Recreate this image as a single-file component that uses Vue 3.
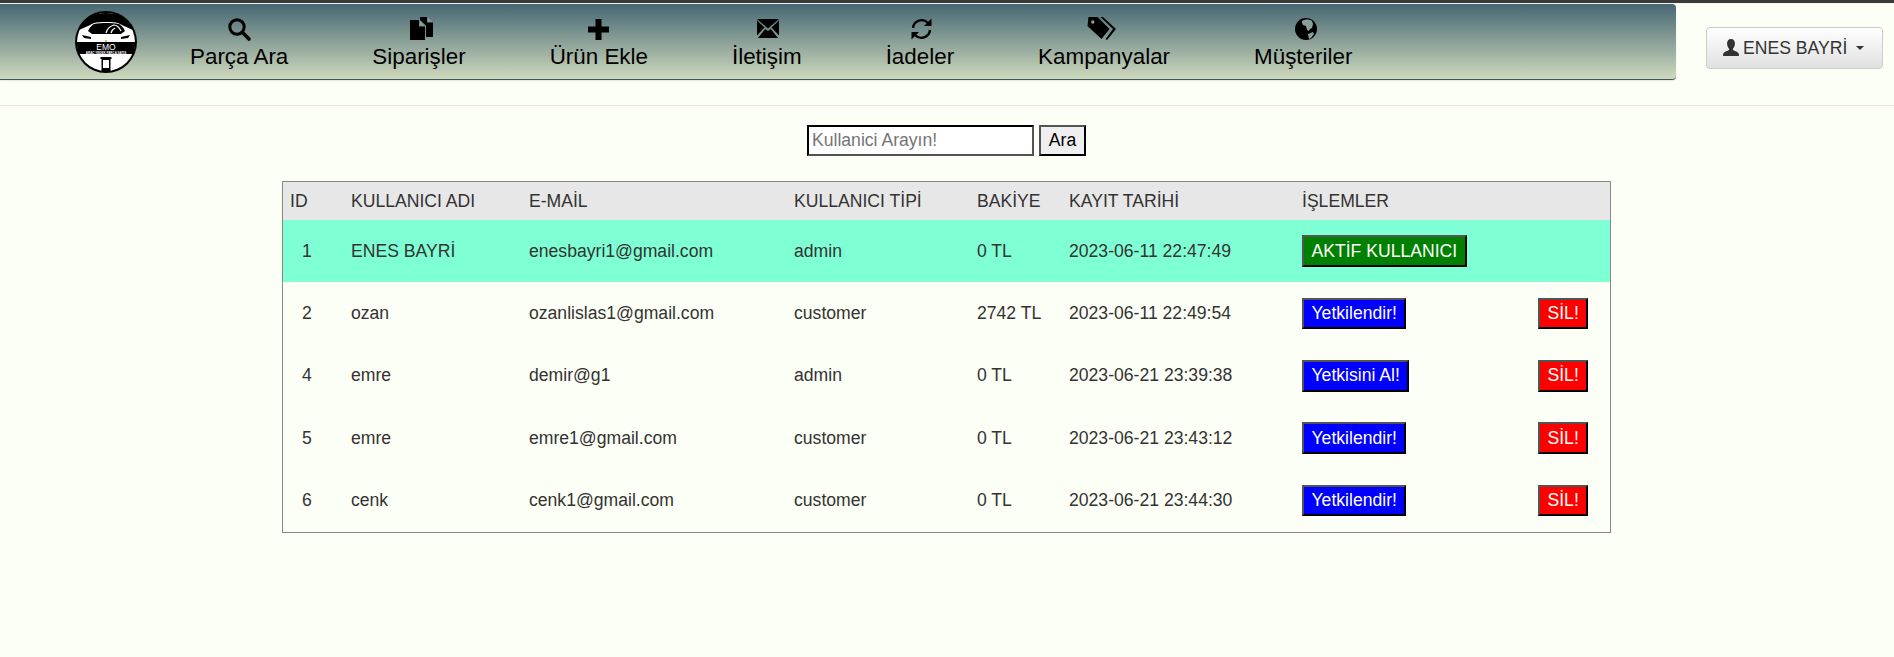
<template>
  <div class="page">
    <div class="top-line"></div>
    <header class="header">
      <nav class="navbar">
        <a class="logo" href="#">
          <svg width="62" height="62" viewBox="0 0 62 62">
            <circle cx="31" cy="31" r="31" fill="#000" />
            <circle cx="31" cy="31" r="29" fill="#fff" />
            <path d="M4 19C9 6 20 2 31 2s22 4 27 17l-9-4-6-3c-3-1-7-1-12-1s-9 0-12 1l-6 3z" fill="#000" />
            <path d="M13 20c2-4 4-6 6-7 4-1 8-1 12-1s9 0 13 1c2 1 4 3 6 7l-4 3H17z" fill="#000" />
            <path d="M31 22c1-4 4-7 8-8 3 0 5 2 7 6M36 22c1-3 2-4 4-5" stroke="#fff" stroke-width="1.200" fill="none" />
            <path d="M7 24l9 2v2l-7-1zM55 24l-9 2v2l7-1z" fill="#000" />
            <path d="M2 31h58c0 5-.5 9-1.500 12H3.500C2.500 40 2 36 2 31z" fill="#000" />
            <circle cx="31" cy="30" r="1" fill="#e8962c" />
            <text x="31" y="39" class="logo-name" text-anchor="middle">EMO</text>
            <text x="31" y="42.500" class="logo-sub" text-anchor="middle">ARAÇ YEDEK PARÇA SATIŞ</text>
            <path d="M25.500 46h11v2h-1v12h-9V48h-1z" fill="#000" />
            <rect x="28" y="49" width="6" height="8" fill="#fff" />
          </svg>
        </a>
        <a v-for="item in menu" :key="item.label" class="nav-item" href="#">
          <svg class="nav-icon" viewBox="0 0 24 24" v-html="item.icon"></svg>
          <span>{{ item.label }}</span>
        </a>
      </nav>
      <button class="user-btn">
        <svg class="user-icon" viewBox="0 0 16 16">
          <path d="M8 0c2.300 0 3.500 1.700 3.500 3.900 0 1.700-.7 3.500-1.600 4.500-.4.500-.3 1.300.3 1.700 1.600.8 3.800 1.400 4.800 3V15H1v-1.900c1-1.600 3.200-2.200 4.800-3 .6-.4.700-1.200.3-1.700C5.200 7.400 4.500 5.600 4.500 3.900 4.500 1.700 5.700 0 8 0z" />
        </svg>
        <span>ENES BAYRİ</span>
        <span class="caret"></span>
      </button>
    </header>
    <hr class="divider" />

    <form class="search" @submit.prevent>
      <input class="search-input" type="text" placeholder="Kullanici Arayın!" />
      <button class="search-btn">Ara</button>
    </form>

    <table class="users">
      <colgroup>
        <col v-for="(w, i) in colWidths" :key="i" :style="{ width: w + 'px' }" />
      </colgroup>
      <thead>
        <tr>
          <th>ID</th>
          <th>KULLANICI ADI</th>
          <th>E-MAİL</th>
          <th>KULLANICI TİPİ</th>
          <th>BAKİYE</th>
          <th>KAYIT TARİHİ</th>
          <th>İŞLEMLER</th>
          <th></th>
        </tr>
      </thead>
      <tbody>
        <tr v-for="u in users" :key="u.id" :class="{ active: u.current }">
          <td class="id">{{ u.id }}</td>
          <td>{{ u.name }}</td>
          <td>{{ u.email }}</td>
          <td>{{ u.type }}</td>
          <td>{{ u.balance }}</td>
          <td>{{ u.date }}</td>
          <td class="btn-cell">
            <button class="act" :class="u.current ? 'green' : 'blue'">{{ u.action }}</button>
          </td>
          <td class="btn-cell del">
            <button v-if="!u.current" class="act red">SİL!</button>
          </td>
        </tr>
      </tbody>
    </table>
  </div>
</template>

<script setup>
const colWidths = [61, 178, 265, 183, 92, 233, 220, 95];

const menu = [
  {
    label: "Parça Ara",
    icon: '<circle cx="10" cy="10" r="7.2" fill="none" stroke="currentColor" stroke-width="3"/><path d="M15.300 15.300l6.700 6.700" stroke="currentColor" stroke-width="3.600" stroke-linecap="round"/>',
  },
  {
    label: "Siparişler",
    icon: '<path d="M3 3h9v6.500h6V23H3z"/><path d="M12.800 3.500l5 5h-5z" fill="#8aa09c"/><path d="M13 0h7v5.500h6V20h-7V8.500L13 3z"/><path d="M20.800 .5l4.700 4.300h-4.700z" fill="#8aa09c"/>',
  },
  {
    label: "Ürün Ekle",
    icon: '<path d="M8.500 2h6v7.500H22v6h-7.500V23h-6v-7.500H1v-6h7.500z"/>',
  },
  {
    label: "İletişim",
    icon: '<path d="M2 2h22L13 11.500z"/><path d="M2 3.500v15l7.500-8z"/><path d="M24 3.500v15l-7.500-8z"/><path d="M3 21l7.300-9 2.700 2 2.700-2 7.300 9z"/>',
  },
  {
    label: "İadeler",
    icon: '<g transform="translate(1.500 0)"><path d="M3.500 11a8.700 8.700 0 0 1 15-5" fill="none" stroke="currentColor" stroke-width="2.400"/><path d="M22 1.500v7.500h-7.500z"/><path d="M20.500 13a8.700 8.700 0 0 1-15 5" fill="none" stroke="currentColor" stroke-width="2.400"/><path d="M2 22.500v-7.500h7.500z"/></g>',
  },
  {
    label: "Kampanyalar",
    icon: '<path d="M-3.500 0h9l12 12-8 10L-4.500 9z"/><circle cx="0.800" cy="5" r="1.700" fill="#8aa09c"/><path d="M8.500 0H11l13 12-9 11-1.500-1L21 12z"/>',
  },
  {
    label: "Müşteriler",
    icon: '<circle cx="15" cy="12" r="11"/><path d="M11 4c3-2 7-2 10 0l1 3-1 4-2 1-1 2-2-1-1-4-3-1-1-2zM17 17l5-2 1 2-3 4-2 1z" fill="#8aa09c"/>',
  },
];

const users = [
  { id: 1, name: "ENES BAYRİ", email: "enesbayri1@gmail.com", type: "admin", balance: "0 TL", date: "2023-06-11 22:47:49", action: "AKTİF KULLANICI", current: true },
  { id: 2, name: "ozan", email: "ozanlislas1@gmail.com", type: "customer", balance: "2742 TL", date: "2023-06-11 22:49:54", action: "Yetkilendir!" },
  { id: 4, name: "emre", email: "demir@g1", type: "admin", balance: "0 TL", date: "2023-06-21 23:39:38", action: "Yetkisini Al!" },
  { id: 5, name: "emre", email: "emre1@gmail.com", type: "customer", balance: "0 TL", date: "2023-06-21 23:43:12", action: "Yetkilendir!" },
  { id: 6, name: "cenk", email: "cenk1@gmail.com", type: "customer", balance: "0 TL", date: "2023-06-21 23:44:30", action: "Yetkilendir!" },
];
</script>

<style>
html,
body {
  margin: 0;
  background: #fcfff5;
}
</style>

<style scoped>
.page {
  min-height: 657px;
  background: #fcfff5;
  font-family: "Liberation Sans", Arial, sans-serif;
  font-size: 17.6px;
  color: #333;
}

.top-line {
  height: 3px;
  background: #3a3a3a;
  border-bottom: 1px solid #f4f4e8;
}

.header {
  display: flex;
  align-items: flex-start;
}

.navbar {
  display: flex;
  align-items: center;
  box-sizing: border-box;
  width: 1676px;
  height: 76px;
  padding-left: 75px;
  background: linear-gradient(to bottom, #466773, #cfd9bd);
  border-bottom: 1px solid #3c5660;
  border-radius: 0 4px 4px 0;
  box-shadow: 0 1px 2px rgba(0, 0, 0, 0.1);
}

.logo {
  display: block;
  height: 62px;
  width: 62px;
  margin-right: 11px;
}

.logo-name {
  fill: #fff;
  font-size: 8.5px;
}

.logo-sub {
  fill: #fff;
  font-size: 3px;
  font-weight: bold;
}

.nav-item {
  display: flex;
  flex-direction: column;
  align-items: center;
  align-self: flex-start;
  margin-top: 13px;
  padding: 0 42px;
  color: #000;
  text-decoration: none;
  font-size: 22.4px;
  line-height: 26px;
}

.nav-icon {
  width: 24px;
  height: 24px;
  margin-bottom: 3px;
  overflow: visible;
  fill: currentColor;
  color: #000;
}

.user-btn {
  display: flex;
  align-items: center;
  box-sizing: border-box;
  width: 177px;
  height: 42px;
  margin: 23px 0 0 30px;
  padding: 0 15px;
  border: 1px solid #ccc;
  border-radius: 4px;
  background: linear-gradient(to bottom, #fff, #e0e0e0);
  font: 17.6px "Liberation Sans", Arial, sans-serif;
  color: #333;
}

.user-icon {
  width: 18px;
  height: 18px;
  margin-right: 3px;
  fill: #333;
}

.caret {
  width: 0;
  height: 0;
  margin-left: 9px;
  border-top: 4px solid #333;
  border-left: 4px solid transparent;
  border-right: 4px solid transparent;
}

.divider {
  height: 1px;
  margin: 25px 0 19px;
  border: 0;
  background: #e6e6e0;
}

.search {
  display: flex;
  justify-content: center;
  gap: 5px;
  height: 31px;
  padding-right: 1px;
}

.search-input {
  box-sizing: border-box;
  width: 227px;
  height: 31px;
  padding: 1px 3px;
  border: 2px inset #000;
  background: #fff;
  font: 17.6px "Liberation Sans", Arial, sans-serif;
}

.search-input::placeholder {
  color: #757575;
}

.search-btn {
  box-sizing: border-box;
  width: 47px;
  height: 31px;
  padding: 0;
  border: 2px outset #000;
  background: #efefef;
  color: #000;
  font: 17.6px "Liberation Sans", Arial, sans-serif;
}

.users {
  table-layout: fixed;
  box-sizing: border-box;
  width: 1329px;
  margin: 25px 0 0 282px;
  border: 1px solid #888;
  border-collapse: separate;
  border-spacing: 0;
}

.users th {
  height: 38px;
  padding: 0 7px;
  background: #e7e7e7;
  text-align: left;
  font-weight: normal;
}

.users td {
  height: 62.4px;
  box-sizing: border-box;
  padding: 0 7px;
}

.users td.id {
  padding-left: 19px;
}

.users td.btn-cell {
  padding-top: 15.3px;
  padding-bottom: 15px;
  vertical-align: top;
}

.users td.del {
  padding-left: 23px;
  padding-right: 0;
}

.users tr.active td {
  background: #7fffd4;
}

.act {
  display: block;
  box-sizing: border-box;
  height: 31.6px;
  padding: 0 7.5px;
  border: 2px outset #000;
  color: #fff;
  font: 17.6px "Liberation Sans", Arial, sans-serif;
}

.green {
  background: green;
}

.blue {
  background: blue;
}

.red {
  background: red;
}
</style>
